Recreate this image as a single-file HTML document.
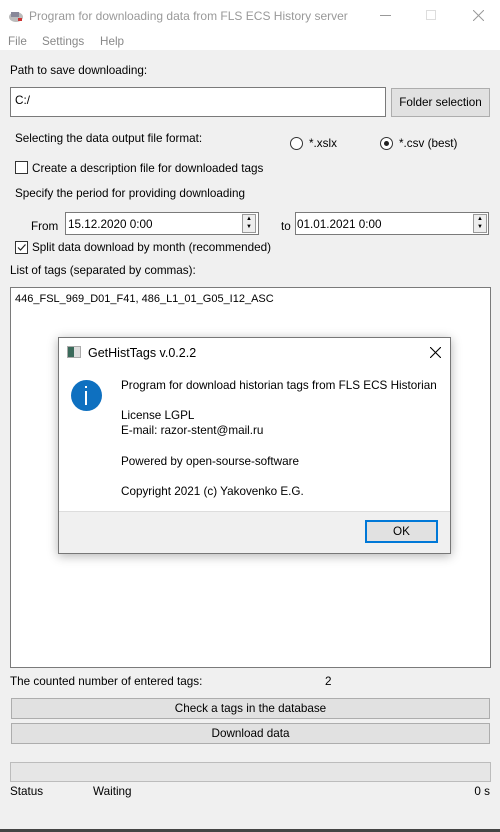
<!DOCTYPE html>
<html><head><style>
*{margin:0;padding:0;box-sizing:border-box}
body{width:500px;height:832px;background:#f0f0f0;font-family:"Liberation Sans",sans-serif;font-size:11.7px;color:#000;position:relative;overflow:hidden}
.a{position:absolute;white-space:nowrap}
.btn{position:absolute;background:#e1e1e1;border:1px solid #adadad;text-align:center}
.box{position:absolute;background:#fff;border:1px solid #7a7a7a}
</style></head><body>
<div class="a" style="left:0;top:0;width:500px;height:50px;background:#fff"></div>
<svg class="a" style="top:8px;left:8px" width="16" height="16"><ellipse cx="8" cy="9" rx="7" ry="5" fill="#bbb"/><rect x="3" y="4" width="8" height="5" fill="#889" /><rect x="10" y="10" width="4" height="3" fill="#c33"/></svg>
<div class="a" style="left:29px;top:9px;font-size:12px;color:#999">Program for downloading data from FLS ECS History server</div>
<div class="a" style="left:380px;top:15px;width:11px;height:1px;background:#999"></div>
<div class="a" style="left:426px;top:10px;width:10px;height:10px;border:1px solid #ddd"></div>
<svg class="a" style="left:473px;top:10px" width="11" height="11"><path d="M0 0L11 11M11 0L0 11" stroke="#999" stroke-width="1"/></svg>
<div class="a" style="left:8px;top:35px;color:#888">File</div>
<div class="a" style="left:42px;top:35px;color:#888">Settings</div>
<div class="a" style="left:100px;top:35px;color:#888">Help</div>

<div class="a" style="left:10px;top:64px">Path to save downloading:</div>
<div class="box" style="left:10px;top:87px;width:376px;height:30px"></div>
<div class="a" style="left:15px;top:94px">C:/</div>
<div class="btn" style="left:391px;top:88px;width:99px;height:29px;line-height:27px">Folder selection</div>

<div class="a" style="left:15px;top:132px">Selecting the data output file format:</div>
<div class="a" style="left:290px;top:137px;width:13px;height:13px;border:1px solid #333;border-radius:50%;background:#fff"></div>
<div class="a" style="left:309px;top:137px">*.xslx</div>
<div class="a" style="left:380px;top:137px;width:13px;height:13px;border:1px solid #333;border-radius:50%;background:#fff"></div>
<div class="a" style="left:384px;top:141px;width:5px;height:5px;border-radius:50%;background:#222"></div>
<div class="a" style="left:399px;top:137px">*.csv (best)</div>

<div class="a" style="left:15px;top:161px;width:13px;height:13px;border:1px solid #333;background:#fff"></div>
<div class="a" style="left:32px;top:162px">Create a description file for downloaded tags</div>
<div class="a" style="left:15px;top:187px">Specify the period for providing downloading</div>

<div class="a" style="left:31px;top:220px">From</div>
<div class="box" style="left:65px;top:212px;width:194px;height:23px"></div>
<div class="a" style="left:68px;top:218px">15.12.2020 0:00</div>
<div class="a" style="left:242px;top:214px;width:14px;height:19px;border:1px solid #999;background:#eee;font-size:6px;line-height:8px;text-align:center">▲<br>▼</div>
<div class="a" style="left:281px;top:220px">to</div>
<div class="box" style="left:295px;top:212px;width:194px;height:23px"></div>
<div class="a" style="left:297px;top:218px">01.01.2021 0:00</div>
<div class="a" style="left:473px;top:214px;width:14px;height:19px;border:1px solid #999;background:#eee;font-size:6px;line-height:8px;text-align:center">▲<br>▼</div>

<div class="a" style="left:15px;top:241px;width:13px;height:13px;border:1px solid #333;background:#fff"></div>
<svg class="a" style="left:16px;top:242px" width="11" height="11"><path d="M2 5.5 L4.5 8 L9.5 2.5" stroke="#222" stroke-width="1.2" fill="none"/></svg>
<div class="a" style="left:32px;top:241px">Split data download by month (recommended)</div>
<div class="a" style="left:10px;top:264px">List of tags (separated by commas):</div>
<div class="box" style="left:10px;top:287px;width:481px;height:381px"></div>
<div class="a" style="left:15px;top:293px;font-size:11px">446_FSL_969_D01_F41, 486_L1_01_G05_I12_ASC</div>

<div class="a" style="left:58px;top:337px;width:393px;height:217px;background:#fff;border:1px solid #777;box-shadow:0 2px 10px rgba(0,0,0,.3)"></div>
<div class="a" style="left:67px;top:346px;width:14px;height:12px;border:1px solid #aaa;background:linear-gradient(90deg,#3a6a5a 0 50%,#ddd 50%)"></div>
<div class="a" style="left:88px;top:346px;font-size:12.5px">GetHistTags v.0.2.2</div>
<svg class="a" style="left:430px;top:347px" width="11" height="11"><path d="M0 0L11 11M11 0L0 11" stroke="#000" stroke-width="1.1"/></svg>
<div class="a" style="left:71px;top:380px;width:31px;height:31px;border-radius:50%;background:#0e70c0"></div>
<div class="a" style="left:85px;top:386px;width:2px;height:2px;background:#fff"></div>
<div class="a" style="left:85px;top:391px;width:2px;height:14px;background:#fff"></div>
<div class="a" style="left:121px;top:379px">Program for download historian tags from FLS ECS Historian</div>
<div class="a" style="left:121px;top:409px">License LGPL</div>
<div class="a" style="left:121px;top:424px">E-mail: razor-stent@mail.ru</div>
<div class="a" style="left:121px;top:455px">Powered by open-sourse-software</div>
<div class="a" style="left:121px;top:485px">Copyright 2021 (c) Yakovenko E.G.</div>
<div class="a" style="left:59px;top:511px;width:391px;height:42px;background:#f0f0f0;border-top:1px solid #ddd"></div>
<div class="a" style="left:365px;top:520px;width:73px;height:23px;background:#e1e1e1;border:2px solid #0078d7;text-align:center;line-height:19px">OK</div>

<div class="a" style="left:10px;top:675px">The counted number of entered tags:</div>
<div class="a" style="left:325px;top:675px">2</div>
<div class="btn" style="left:11px;top:698px;width:479px;height:21px;line-height:19px">Check a tags in the database</div>
<div class="btn" style="left:11px;top:723px;width:479px;height:21px;line-height:19px">Download data</div>
<div class="a" style="left:10px;top:762px;width:481px;height:20px;background:#e6e6e6;border:1px solid #bcbcbc"></div>
<div class="a" style="left:10px;top:785px">Status</div>
<div class="a" style="left:93px;top:785px">Waiting</div>
<div class="a" style="right:10px;top:785px">0 s</div>
<div class="a" style="left:0;top:829px;width:500px;height:3px;background:#444"></div>
</body></html>
